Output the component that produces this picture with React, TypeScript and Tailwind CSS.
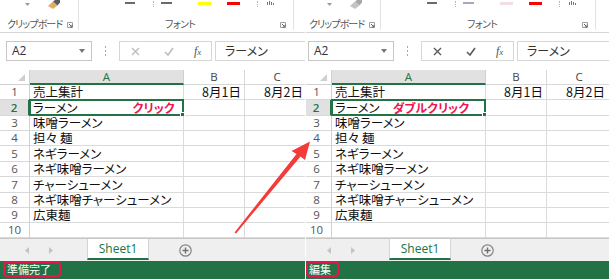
import React from "react";

const JP = "font-['Noto_Sans_CJK_JP',sans-serif] [font-feature-settings:'palt']";
const UI = "font-['Open_Sans','Liberation_Sans',sans-serif]";

const rowHeights = [
  "h-[15px]",
  "h-[16px]",
  "h-[15px]",
  "h-[15px]",
  "h-[16px]",
  "h-[15px]",
  "h-[16px]",
  "h-[15px]",
  "h-[15px]",
  "h-[15px]",
];

const cellA = [
  "売上集計",
  "ラーメン",
  "味噌ラーメン",
  "担々 麺",
  "ネギラーメン",
  "ネギ味噌ラーメン",
  "チャーシューメン",
  "ネギ味噌チャーシューメン",
  "広東麺",
  "",
];

function Launcher() {
  return (
    <svg width="6" height="6" viewBox="0 0 6 6" className="block">
      <path d="M0.5 0.5H5.5V5.5H0.5Z" fill="none" stroke="#a0a0a0" strokeWidth="1" />
      <path d="M2 2L4.6 4.6M5 2.8V5H2.8" stroke="#606060" strokeWidth="1" fill="none" />
    </svg>
  );
}

function Brush({ editing }: { editing: boolean }) {
  return (
    <svg width="12" height="9" viewBox="0 0 12 9" className="block">
      <path d="M0 6 L5 1.5 L9.5 5.5 L5 9Z" fill={editing ? "#c4c4c4" : "#e2ad63"} />
      <path d="M5 1.5 L7 0 L12 0 L12 2.5 L9.5 5.5Z" fill={editing ? "#a8a8a8" : "#5a5a5a"} />
    </svg>
  );
}

function Ribbon({ editing }: { editing: boolean }) {
  return (
    <div className="flex h-[33px] border-b border-[#d6d6d6] bg-white">
      {/* Clipboard group */}
      <div className="flex h-[30px] w-[79px] flex-col border-r border-[#e2e2e2]">
        <div className="flex h-[10px] items-start">
          <svg width="5" height="3" viewBox="0 0 5 3" className="ml-[25px] mt-[3px] block">
            <path d="M0 0H5L2.5 3Z" fill="#9a9a9a" />
          </svg>
          <div className="ml-[18px]">
            <Brush editing={editing} />
          </div>
        </div>
        <div className="mt-[9px] flex items-center">
          <span
            className={`${JP} ml-[7px] whitespace-nowrap text-[10px] tracking-[-0.9px] leading-none text-[#555]`}
          >
            クリップボード
          </span>
          <div className="ml-auto mr-[5px] mt-[2px]">
            <Launcher />
          </div>
        </div>
      </div>
      {/* Font group */}
      <div className="flex h-[30px] w-[215px] flex-col border-r border-[#e2e2e2]">
        <div className="flex h-[10px] items-start">
          <span className="ml-[46px] mt-[2px] block h-[1.5px] w-[10px] bg-[#6a6a6a]" />
          <span className="ml-[18px] mt-[1px] block h-[6px] w-0 border-l border-dotted border-[#b8b8b8]" />
          <span
            className={`ml-[7px] mt-[2px] block h-[1.5px] w-[11px] ${editing ? "bg-[#a9a6c4]" : "bg-[#6a6a6a]"}`}
          />
          <span
            className={`ml-[26px] mt-[1.5px] block h-[3px] w-[13px] ${editing ? "bg-[#f1dde2]" : "bg-[#ffff00]"}`}
          />
          <span className="ml-[16px] mt-[1.5px] block h-[3px] w-[13px] bg-[#ff0000]" />
          <span className="ml-[17px] mt-[1px] block h-[6px] w-0 border-l border-dotted border-[#b8b8b8]" />
          <span className="ml-[9px] mt-[1px] flex h-[4px] items-end gap-[1px]">
            <span className="block h-[3px] w-[1px] bg-[#777]" />
            <span className="block h-[4px] w-[1px] bg-[#777]" />
            <span className="block h-[3px] w-[1px] bg-[#777]" />
            <span className="block h-[2px] w-[1px] bg-[#777]" />
          </span>
        </div>
        <div className="mt-[9px] flex items-center">
          <span
            className={`${JP} ml-[86px] whitespace-nowrap text-[10px] tracking-[-0.6px] leading-none text-[#555]`}
          >
            フォント
          </span>
          <div className="ml-auto mr-[7px] mt-[2px]">
            <Launcher />
          </div>
        </div>
      </div>
      <div className="flex-1" />
    </div>
  );
}

function FormulaBar({ editing }: { editing: boolean }) {
  const btn = editing ? "#5a5a5a" : "#bdbdbd";
  return (
    <div className="mt-[8px] flex h-[20px]">
      <div className="ml-[6px] flex w-[86px] items-center justify-between border border-[#c6c6c6] pl-[5px] pr-[6px]">
        <span className={`${UI} text-[12px] leading-none text-[#333]`}>A2</span>
        <svg width="6" height="4" viewBox="0 0 6 4" className="block">
          <path d="M0 0H6L3 4Z" fill="#777" />
        </svg>
      </div>
      <div className="flex w-[27px] flex-col items-center justify-center gap-[2px]">
        <span className="block h-[2px] w-[1px] bg-[#a8a8a8]" />
        <span className="block h-[2px] w-[1px] bg-[#a8a8a8]" />
        <span className="block h-[2px] w-[1px] bg-[#a8a8a8]" />
      </div>
      <div className="flex w-[93px] items-center border border-[#d6d6d6]">
        <svg width="9" height="9" viewBox="0 0 9 9" className="ml-[11px] block">
          <path d="M1 1L8 8M8 1L1 8" stroke={btn} strokeWidth="1.4" />
        </svg>
        <svg width="10" height="9" viewBox="0 0 10 9" className="ml-[24px] block">
          <path d="M1 5L4 8L9 1" stroke={btn} strokeWidth="1.6" fill="none" />
        </svg>
        <span className="ml-[20px] font-['Liberation_Serif',serif] text-[12px] italic leading-none text-[#555]">
          f<span className="text-[9px]">x</span>
        </span>
      </div>
      <div className="ml-[3px] flex flex-1 items-center border border-r-0 border-[#d6d6d6] pl-[9px]">
        <span className={`${JP} whitespace-nowrap text-[12px] leading-none text-[#333]`}>ラーメン</span>
      </div>
    </div>
  );
}

function Grid({ label }: { label: string }) {
  return (
    <div className="mt-[9px] flex flex-col">
      {/* column header */}
      <div className="flex h-[15px]">
        <div className="relative w-[30px] border-r border-b border-[#d0d0d0]">
          <svg width="7" height="7" viewBox="0 0 7 7" className="absolute bottom-[3px] right-[4px] block">
            <path d="M7 0V7H0Z" fill="#cfcfcf" />
          </svg>
        </div>
        <div className="flex w-[154px] items-center justify-center border-r border-[#d0d0d0] border-b-2 border-b-[#217346] bg-[#e1e1e1]">
          <span className={`${UI} text-[11.5px] leading-none text-[#217346]`}>A</span>
        </div>
        <div className="flex w-[61px] items-center justify-center border-r border-b border-[#d8d8d8]">
          <span className={`${UI} text-[11.5px] leading-none text-[#444]`}>B</span>
        </div>
        <div className="flex w-[64px] items-center justify-center border-b border-[#d8d8d8]">
          <span className={`${UI} text-[11.5px] leading-none text-[#444]`}>C</span>
        </div>
      </div>
      {rowHeights.map((h, i) => {
        const sel = i === 1;
        return (
          <div key={i} className={`flex ${h}`}>
            <div
              className={`flex w-[30px] items-center justify-center border-b border-[#d8d8d8] ${
                sel ? "border-r-2 border-r-[#217346] bg-[#e1e1e1]" : "border-r border-r-[#d0d0d0]"
              }`}
            >
              <span
                className={`${UI} text-[11.5px] leading-none ${
                  sel ? "font-semibold text-[#217346]" : "text-[#555]"
                }`}
              >
                {i + 1}
              </span>
            </div>
            <div className="relative flex w-[154px] items-center border-r border-b border-[#dadada] pl-[3px]">
              <span className={`${JP} whitespace-nowrap text-[12.5px] leading-[12px] text-[#111]`}>{cellA[i]}</span>
              {sel && (
                <span
                  className={`${JP} whitespace-nowrap text-[12px] font-bold leading-[12px] text-[#f01450] ${
                    label === "クリック" ? "ml-[55px]" : "ml-[13px]"
                  }`}
                >
                  {label}
                </span>
              )}
              {sel && (
                <div className="absolute left-[-1px] top-[-1px] bottom-[-1px] right-[-1px] border-2 border-[#217346]">
                  <span className="absolute bottom-[-3px] right-[-3px] block h-[5px] w-[5px] border border-white bg-[#217346]" />
                </div>
              )}
            </div>
            <div className="flex w-[61px] items-center justify-end border-r border-b border-[#dadada] pr-[3px]">
              {i === 0 && (
                <span className={`${JP} whitespace-nowrap text-[12.5px] leading-[12px] text-[#111]`}>8月1日</span>
              )}
            </div>
            <div className="flex w-[64px] items-center justify-end border-b border-[#dadada] pr-[6px]">
              {i === 0 && (
                <span className={`${JP} whitespace-nowrap text-[12.5px] leading-[12px] text-[#111]`}>8月2日</span>
              )}
            </div>
          </div>
        );
      })}
    </div>
  );
}

function TabBar() {
  return (
    <div className="flex h-[23px] items-start border-t border-[#c8c8c8] bg-[#efefef]">
      <svg width="4" height="7" viewBox="0 0 4 7" className="ml-[25px] mt-[8px] block">
        <path d="M4 0V7L0 3.5Z" fill="#c4c4c4" />
      </svg>
      <svg width="4" height="7" viewBox="0 0 4 7" className="ml-[20px] mt-[8px] block">
        <path d="M0 0V7L4 3.5Z" fill="#c4c4c4" />
      </svg>
      <div className="ml-[34px] flex h-[21px] w-[62px] items-center justify-center border-x border-[#d4d4d4] border-b-2 border-b-[#217346] bg-white">
        <span className={`${UI} text-[12px] leading-none text-[#217346]`}>Sheet1</span>
      </div>
      <svg width="13" height="13" viewBox="0 0 13 13" className="ml-[30px] mt-[5px] block">
        <circle cx="6.5" cy="6.5" r="5.7" fill="none" stroke="#858585" strokeWidth="1.2" />
        <path d="M6.5 3.5V9.5M3.5 6.5H9.5" stroke="#707070" strokeWidth="1.4" />
      </svg>
    </div>
  );
}

function StatusBar({ status, wide }: { status: string; wide: boolean }) {
  return (
    <div className="flex h-[18px] items-start bg-[#217346]">
      <div
        className={`flex h-[16px] items-center rounded-[4px] border-2 border-[#e3174b] ${
          wide ? "ml-[3px] w-[58px] pl-[2px]" : "ml-[4px] w-[33px] pl-[1px]"
        }`}
      >
        <span className={`${JP} whitespace-nowrap text-[11px] leading-none text-white`}>{status}</span>
      </div>
    </div>
  );
}

function Panel({ label, status, editing }: { label: string; status: string; editing: boolean }) {
  return (
    <div className="flex h-[279px] w-[309px] flex-col bg-white">
      <Ribbon editing={editing} />
      <FormulaBar editing={editing} />
      <Grid label={label} />
      <TabBar />
      <StatusBar status={status} wide={!editing} />
    </div>
  );
}

export default function App() {
  return (
    <div className="relative flex h-[279px] w-[609px] gap-[1px] overflow-hidden bg-white">
      <div className="w-[305px] shrink-0 overflow-hidden">
        <Panel label="クリック" status="準備完了" editing={false} />
      </div>
      <div className="w-[303px] shrink-0 overflow-hidden">
        <div className="ml-[-4px]">
          <Panel label="ダブルクリック" status="編集" editing={true} />
        </div>
      </div>
      <svg
        width="609"
        height="279"
        viewBox="0 0 609 279"
        className="pointer-events-none absolute left-0 top-0 block"
      >
        <polygon
          points="234.5,232.5 296.5,154 291.5,151 310,141.5 305,160 300.5,156.5 236,233.5"
          fill="#f53a3a"
        />
      </svg>
    </div>
  );
}
